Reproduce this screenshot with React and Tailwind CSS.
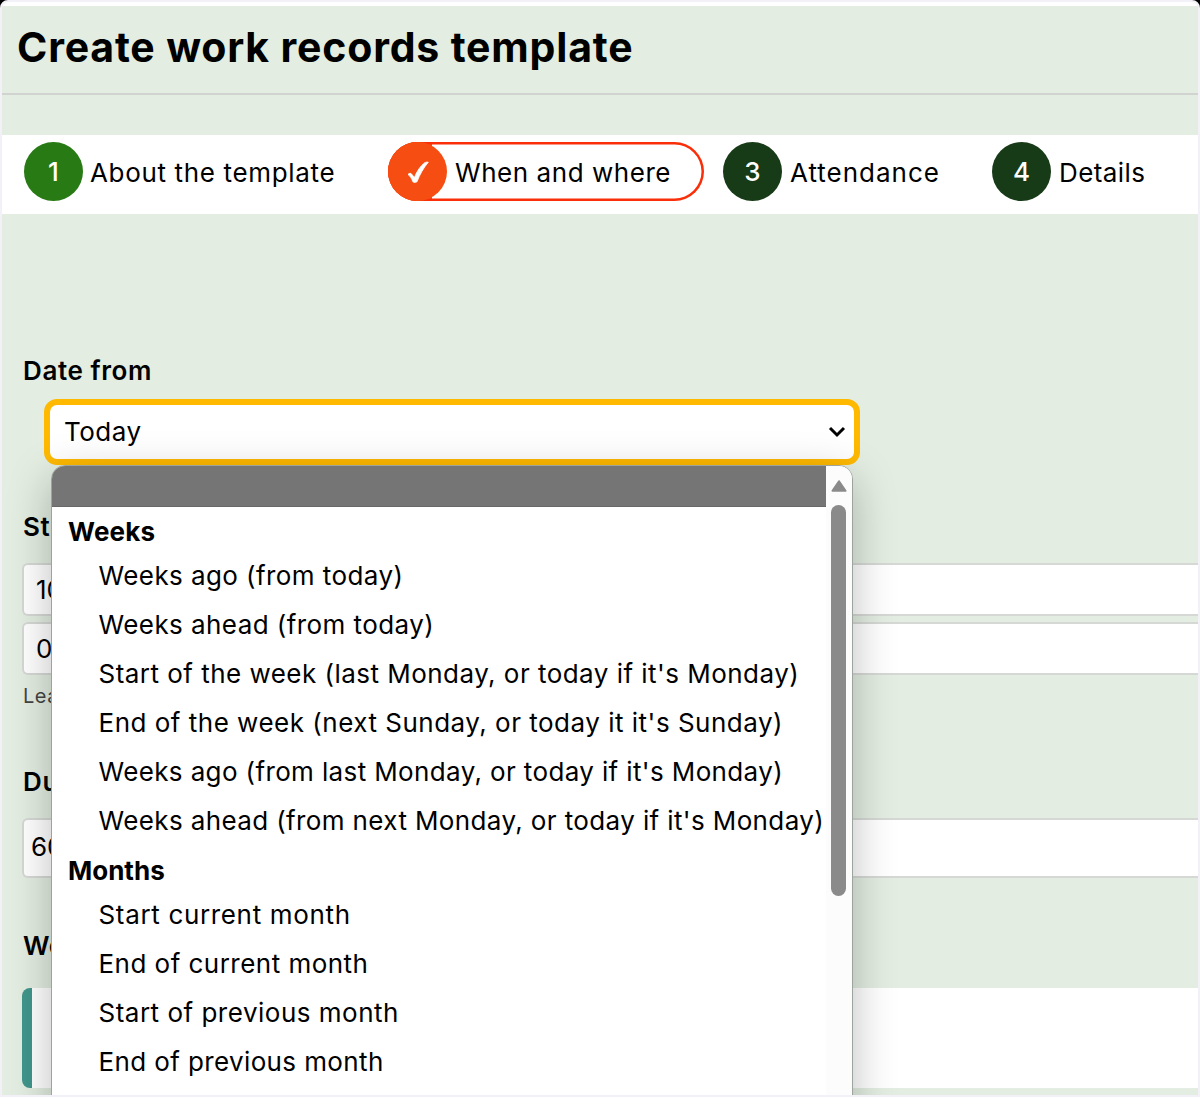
const groups = [
  {
    label: "Weeks",
    tracking: "tracking-[0.2px]",
    options: [
      ["Weeks ago (from today)", "tracking-[0.42px]"],
      ["Weeks ahead (from today)", "tracking-[0.43px]"],
      ["Start of the week (last Monday, or today if it's Monday)", "tracking-[0.47px]"],
      ["End of the week (next Sunday, or today it it's Sunday)", "tracking-[0.5px]"],
      ["Weeks ago (from last Monday, or today if it's Monday)", "tracking-[0.37px]"],
      ["Weeks ahead (from next Monday, or today if it's Monday)", "tracking-[0.38px]"],
    ],
  },
  {
    label: "Months",
    tracking: "tracking-[0px]",
    options: [
      ["Start current month", "tracking-[0.66px]"],
      ["End of current month", "tracking-[0.47px]"],
      ["Start of previous month", "tracking-[0.5px]"],
      ["End of previous month", "tracking-[0.38px]"],
    ],
  },
];

function Badge({ color, children }) {
  return (
    <span className={`flex size-[59px] shrink-0 items-center justify-center rounded-full font-medium text-white ${color}`}>
      {children}
    </span>
  );
}

function Label({ className, children }) {
  return <div className={`ml-[21px] h-8 font-semibold leading-8 tracking-[0.6px] ${className}`}>{children}</div>;
}

function Field({ className, children }) {
  return (
    <div className={`ml-5 flex items-center rounded-l-md border-2 border-r-0 border-[#d6d8d6] bg-white ${className}`}>
      {children}
    </div>
  );
}

function Dropdown() {
  return (
    <div className="absolute left-[49px] top-[463px] flex h-[660px] w-[802px] overflow-hidden rounded-[14px] border border-[#9da39d] bg-white shadow-[0_12px_44px_rgba(0,0,0,0.26)]">
      <div className="flex-1">
        <div className="h-[41px] border-b border-[#686868] bg-[#757575]" />
        {groups.map((group) => (
          <div key={group.label}>
            <div className={`h-11 pl-4 pt-[9px] font-bold leading-8 ${group.tracking}`}>{group.label}</div>
            {group.options.map(([text, tracking]) => (
              <div key={text} className={`h-[49.1px] whitespace-nowrap pl-[46.5px] leading-[49.1px] ${tracking}`}>
                {text}
              </div>
            ))}
          </div>
        ))}
      </div>
      <div className="flex w-[26px] shrink-0 flex-col items-center bg-[#fcfcfc] pr-px pt-[14px]">
        <svg className="h-3 w-4 shrink-0" viewBox="0 0 16 12">
          <path d="M8 1.2 14.5 10.8H1.5Z" fill="#8a8a8a" stroke="#8a8a8a" strokeWidth="2" strokeLinejoin="round" />
        </svg>
        <div className="mt-[13px] h-[391px] w-[15px] shrink-0 rounded-full bg-[#8a8a8a]" />
      </div>
    </div>
  );
}

export default function App() {
  return (
    <div className="h-[1097px] w-[1200px] overflow-hidden bg-black font-['Inter',sans-serif] text-[26px] text-black">
      <div className="relative h-full overflow-hidden rounded-t-[8px] border-2 border-[#f1f1f7] bg-[#e3ede1]">
        <div className="h-1 rounded-t-md bg-white" />
        <header className="h-[89px] border-b-2 border-[#d1d3d1]">
          <h1 className="ml-[15px] h-[83px] whitespace-nowrap text-[41px] font-bold leading-[83px] tracking-[0.82px]">
            Create work records template
          </h1>
        </header>
        <nav className="mt-10 flex h-[79px] items-start whitespace-nowrap bg-white pl-[22px] pt-[7px] leading-[61px]">
          <div className="flex w-[364px]">
            <Badge color="bg-[#277a14]">1</Badge>
            <span className="ml-[7px] tracking-[0.66px]">About the template</span>
          </div>
          <div className="mr-[19px] flex h-[59px] w-[316px] rounded-full bg-[linear-gradient(90deg,#f64e12_44px,#fff_44px)] shadow-[inset_0_0_0_2.5px_#fa2f0a]">
            <Badge color="bg-[#f64e12]">
              <svg className="size-6" viewBox="0 0 24 24" fill="#fff" stroke="#fff" strokeWidth="0.8" strokeLinejoin="round">
                <path d="M2 14.500C3 13 5 12.800 6 14.500L8.400 17.500C11 11 14.500 6 18.600 2.800C20 2 21.300 2 22.300 2.200C17.500 8 13.700 14.500 11 21.800Q8 23.200 6.900 21.800C5.600 18.500 4.200 16 2 14.500Z" />
              </svg>
            </Badge>
            <span className="ml-[8px] tracking-[0.55px]">When and where</span>
          </div>
          <div className="flex w-[269px]">
            <Badge color="bg-[#173a17]">3</Badge>
            <span className="ml-[8px] tracking-[1px]">Attendance</span>
          </div>
          <div className="flex">
            <Badge color="bg-[#173a17]">4</Badge>
            <span className="ml-[8px] tracking-[0.4px]">Details</span>
          </div>
        </nav>

        <Label className="mt-[141px]">Date from</Label>
        <div className="ml-[42px] mt-[12px] flex h-[66px] w-[816px] items-center justify-between rounded-[13px] border-[6px] border-[#ffb900] bg-white pb-px pl-[14px] pr-2 tracking-[0.5px]">
          <span>Today</span>
          <svg className="h-3 w-[18px]" viewBox="0 0 18 12" fill="none" stroke="#000" strokeWidth="3">
            <path d="M2 2 9 9 16 2" />
          </svg>
        </div>

        <Label className="mt-[46px]">St</Label>
        <Field className="mt-[20px] h-[53px] pl-3">10</Field>
        <Field className="mt-[6px] h-[53px] pl-3">0</Field>
        <div className="ml-[21px] mt-[5px] h-8 text-[20px] leading-8 tracking-[0.5px] text-[#444]">Lea</div>
        <Label className="mt-[54px]">Du</Label>
        <Field className="mt-[20px] h-[60px] pb-1 pl-[7px]">60</Field>
        <Label className="mt-[52px]">Wo</Label>
        <div className="ml-5 mt-[26px] h-[100px] rounded-l-lg border-l-[10px] border-[#40968b] bg-white" />
        <Dropdown />
      </div>
    </div>
  );
}
